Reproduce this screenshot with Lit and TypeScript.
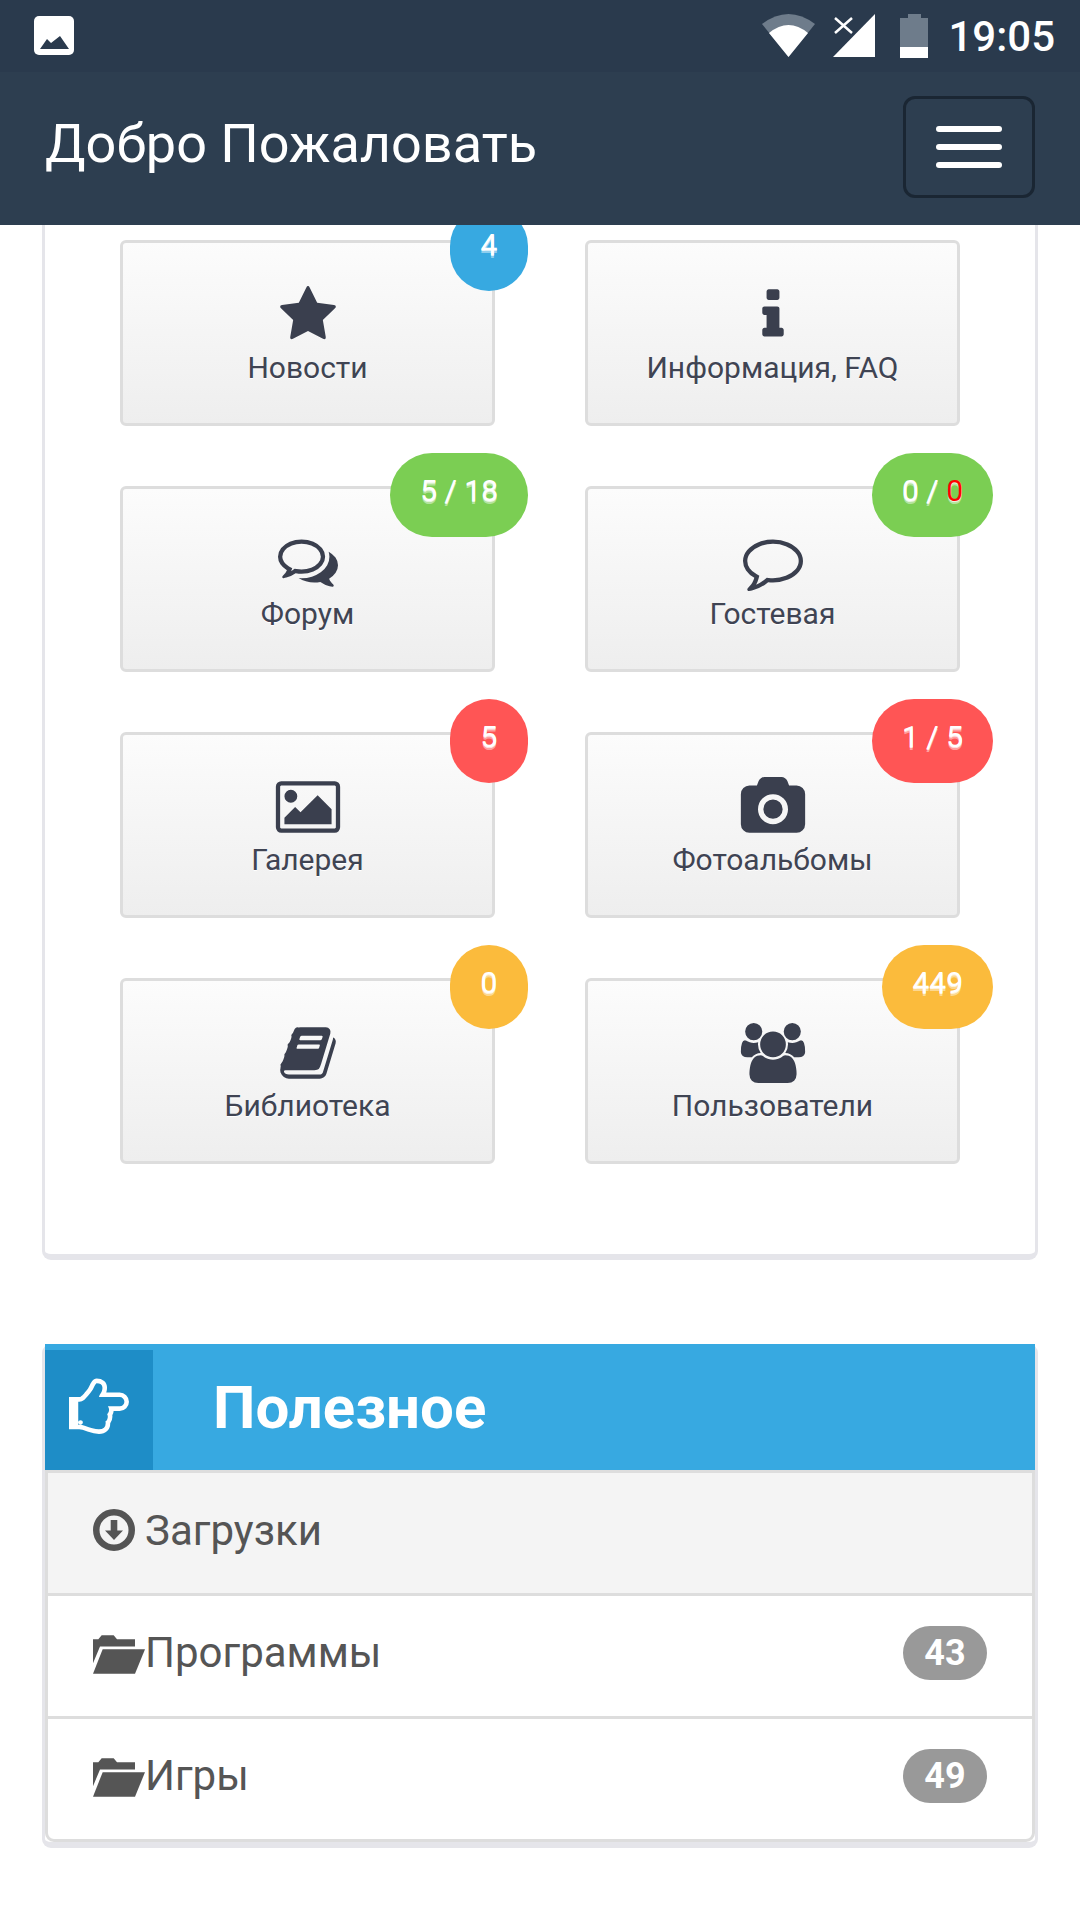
import { LitElement, html, css } from "lit";
import { customElement } from "lit/decorators.js";

// Glyph outlines on the 1792 grid, same box for every tile icon
const ICONS: Record<string, string> = {
  star: "M1728 647q0 22-26 48l-363 354 86 500q1 7 1 20 0 21-10.5 35.5t-30.5 14.5q-19 0-40-12l-449-236-449 236q-22 12-40 12-21 0-31.5-14.5t-10.5-35.5q0-6 2-20l86-500-364-354q-25-27-25-48 0-37 56-46l502-73 225-455q19-41 49-41t49 41l225 455 502 73q56 9 56 46z",
  info: "M1216 1344v128q0 26-19 45t-45 19h-512q-26 0-45-19t-19-45v-128q0-26 19-45t45-19h64v-384h-64q-26 0-45-19t-19-45v-128q0-26 19-45t45-19h384q26 0 45 19t19 45v576h64q26 0 45 19t19 45zm-128-1152v192q0 26-19 45t-45 19h-256q-26 0-45-19t-19-45v-192q0-26 19-45t45-19h256q26 0 45 19t19 45z",
  comments: "M704 384q-153 0-286 52t-211.5 141-78.5 191q0 82 53 158t149 132l97 56-35 84q34-20 62-39l44-31 53 10q78 14 153 14 153 0 286-52t211.5-141 78.5-191-78.5-191-211.5-141-286-52zm0-128q191 0 353.5 68.5t256.5 186.5 94 257-94 257-256.5 186.5-353.5 68.5q-86 0-176-16-124 88-278 128-36 9-86 16h-3q-11 0-20.5-8t-11.5-21q-1-3-1-6.5t.5-6.5 2-6l2.5-5 3.5-5.5 4-5 4.5-5 4-4.5q5-6 23-25t26-29.5 22.5-29 25-38.5 20.5-44q-124-72-195-177t-71-224q0-139 94-257t256.5-186.5 353.5-68.5zm822 1169q10 24 20.5 44t25 38.5 22.5 29 26 29.5 23 25q1 1 4 4.5t4.5 5 4 5 3.5 5.5l2.5 5 2 6 .5 6.5-1 6.5q-3 14-13 22t-22 7q-50-7-86-16-154-40-278-128-90 16-176 16-271 0-472-132 58 4 88 4 161 0 309-45t264-129q125-92 192-212t67-254q0-77-23-152 129 71 204 178t75 230q0 120-71 224.5t-195 176.5z",
  comment: "M896 384q-204 0-381.5 69.5t-282 187.5-104.5 255q0 112 71.5 213.5t201.5 175.5l87 50-27 96q-24 91-70 172 152-63 275-171l43-38 57 6q69 8 130 8 204 0 381.5-69.5t282-187.5 104.5-255-104.5-255-282-187.5-381.5-69.5zm896 512q0 174-120 321.5t-326 233-450 85.5q-70 0-145-8-198 175-460 242-49 14-114 22h-5q-15 0-27-10.5t-16-27.5v-1q-3-4-.5-12t2-10 4.5-9.5l6-9 7-8.5 8-9q7-8 31-34.5t34.5-38 31-39.5 32.5-51 27-59 26-76q-157-89-247.5-220t-90.5-281q0-174 120-321.5t326-233 450-85.5 450 85.5 326 233 120 321.5z",
  picture: "M576 576q0 80-56 136t-136 56-136-56-56-136 56-136 136-56 136 56 56 136zm1024 384v448h-1408v-192l320-320 160 160 512-512zm96-704h-1600q-13 0-22.5 9.5t-9.5 22.5v1216q0 13 9.5 22.5t22.5 9.5h1600q13 0 22.5-9.5t9.5-22.5v-1216q0-13-9.5-22.5t-22.5-9.5zm160 32v1216q0 66-47 113t-113 47h-1600q-66 0-113-47t-47-113v-1216q0-66 47-113t113-47h1600q66 0 113 47t47 113z",
  camera: "M896 672q119 0 203.5 84.5t84.5 203.5-84.5 203.5-203.5 84.5-203.5-84.5-84.5-203.5 84.5-203.5 203.5-84.5zm704-416q106 0 181 75t75 181v896q0 106-75 181t-181 75h-1408q-106 0-181-75t-75-181v-896q0-106 75-181t181-75h224l51-136q19-49 69.5-84.5t103.5-35.5h512q53 0 103.5 35.5t69.5 84.5l51 136h224zm-704 1152q185 0 316.5-131.5t131.5-316.5-131.5-316.5-316.5-131.5-316.5 131.5-131.5 316.5 131.5 316.5 316.5 131.5z",
  book: "M1703 478q40 57 18 129l-275 906q-19 64-76.5 107.5t-122.5 43.5h-923q-77 0-148.5-53.5t-99.5-131.5q-24-67-2-127 0-4 3-27t4-37q1-8-3-21.5t-3-19.5q2-11 8-21t16.5-23.5 16.5-23.5q23-38 45-91.5t30-91.5q3-10 .5-30t-.5-28q3-11 17-28t17-23q21-36 42-92t25-90q1-9-2.5-32t.5-28q4-13 22-30.5t22-22.5q19-26 42.5-84.5t27.5-96.5q1-8-3-25.5t-2-26.5q2-8 9-18t18-23 17-21q8-12 16.5-30.5t15-35 16-36 19.5-32 26.5-23.5 36-11.5 47.5 5.5l-1 3q38-9 51-9h761q74 0 114 56t18 130l-274 906q-36 119-71.5 153.5t-128.5 34.5h-869q-27 0-38 15-11 16-1 43 24 70 144 70h923q29 0 56-15.5t35-41.5l300-987q7-22 5-57 38 15 59 43zm-1064 2q-4 13 2 22.5t20 9.5h608q13 0 25.5-9.5t16.5-22.5l21-64q4-13-2-22.5t-20-9.5h-608q-13 0-25.5 9.5t-16.5 22.5zm-83 256q-4 13 2 22.5t20 9.5h608q13 0 25.5-9.5t16.5-22.5l21-64q4-13-2-22.5t-20-9.5h-608q-13 0-25.5 9.5t-16.5 22.5z",
  users: "M529 896q-162 5-265 128h-134q-82 0-138-40.5t-56-118.5q0-353 124-353 6 0 43.5 21t97.5 42.5 119 21.5q67 0 133-23-5 37-5 66 0 139 81 256zm1071 637q0 120-73 189.5t-194 69.5h-874q-121 0-194-69.5t-73-189.5q0-53 3.5-103.5t14-109 26.5-108.5 43-97.5 62-81 85.5-53.5 111.5-20q10 0 43 21.5t73 48 107 48 135 21.5 135-21.5 107-48 73-48 43-21.5q61 0 111.5 20t85.5 53.5 62 81 43 97.5 26.5 108.5 14 109 3.5 103.5zm-1024-1277q0 106-75 181t-181 75-181-75-75-181 75-181 181-75 181 75 75 181zm704 384q0 159-112.5 271.5t-271.5 112.5-271.5-112.5-112.5-271.5 112.5-271.5 271.5-112.5 271.5 112.5 112.5 271.5zm576 225q0 78-56 118.5t-138 40.5h-134q-103-123-265-128 81-117 81-256 0-29-5-66 66 23 133 23 59 0 119-21.5t97.5-42.5 43.5-21q124 0 124 353zm-128-609q0 106-75 181t-181 75-181-75-75-181 75-181 181-75 181 75 75 181z",
};

const HAND =
  "M384 1344q0-26-19-45t-45-19-45 19-19 45 19 45 45 19 45-19 19-45zm1152-576q0-51-39-89.5t-89-38.5h-576q0-20 15-48.5t33-55 33-68 15-84.5q0-67-44.5-97.5t-115.5-30.5q-24 0-90 139-24 44-37 65-40 64-112 145-71 81-101 106-69 57-140 57h-32v640h32q72 0 167 32t193.5 64 179.5 32q189 0 189-167 0-26-5-56 30-16 47.5-52.5t17.5-73.5-18-69q53-50 53-119 0-25-10-55.5t-25-47.5h331q52 0 90-38t38-90zm128-1q0 105-76 181t-181 76h-169q-4 62-37 119 3 21 3 43 0 101-60 178 1 139-85 219.5t-227 80.5q-133 0-322-69-164-59-223-59h-288q-53 0-90.5-37.5t-37.5-90.5v-640q0-53 37.5-90.5t90.5-37.5h288q10 0 21.5-4.5t23.5-14 22.5-18 24-22.5 20.5-21.5 19-21.5 14-17q65-74 100-129 13-21 33-62t37-72 40.5-63 55-49.5 69.5-17.5q125 0 206.5 67t81.5 189q0 68-22 128h374q104 0 180 76t76 179z";

const TILES = [
  { icon: "star", label: "Новости", tone: "blue", badge: html`4` },
  { icon: "info", label: "Информация, FAQ" },
  { icon: "comments", label: "Форум", tone: "green", badge: html`5 / 18` },
  { icon: "comment", label: "Гостевая", tone: "green", badge: html`0 / <span class="red">0</span>` },
  { icon: "picture", label: "Галерея", tone: "coral", badge: html`5` },
  { icon: "camera", label: "Фотоальбомы", tone: "coral", badge: html`1 / 5` },
  { icon: "book", label: "Библиотека", tone: "amber", badge: html`0` },
  { icon: "users", label: "Пользователи", tone: "amber", badge: html`449` },
];

const folder = html`<svg class="folder" viewBox="0 0 156 116">
  <path d="M0 12H16L26 0H62L72 12H126V34H21L0 84Z" />
  <path d="M29 42H156L126 116H0Z" />
</svg>`;

@customElement("app-root")
export class AppRoot extends LitElement {
  static styles = css`
    :host {
      display: block;
      height: 1920px;
      overflow: hidden;
      background: #fff;
      font-family: Roboto, "Liberation Sans", sans-serif;
    }

    .top {
      position: relative;
      z-index: 2;
      background: #2d3e50;
    }

    .status {
      height: 72px;
      background: #2a3a4d;
      display: flex;
      align-items: flex-start;
      color: #fff;
    }
    .status svg {
      display: block;
      flex: none;
      margin-top: 14px;
    }
    .status .pic {
      margin: 16px auto 0 34px;
    }
    .status .wifi {
      margin-right: 18px;
    }
    .status .signal {
      margin-right: 25px;
    }
    .clock {
      margin: 13px 25px 0 20px;
      font-size: 42px;
      line-height: 48px;
      font-weight: 500;
    }

    .nav {
      height: 153px;
      box-sizing: border-box;
      padding: 24px 45px 0;
      display: flex;
      align-items: flex-start;
      justify-content: space-between;
      color: #fff;
    }
    .brand {
      font-size: 54px;
      line-height: 72px;
      margin-top: 12px;
    }
    .toggle {
      width: 132px;
      height: 102px;
      box-sizing: border-box;
      border: 3px solid #1a2633;
      border-radius: 12px;
      display: flex;
      flex-direction: column;
      align-items: center;
      gap: 12px;
      padding-top: 27px;
    }
    .toggle i {
      display: block;
      width: 66px;
      height: 6px;
      border-radius: 3px;
      background: #fff;
    }

    .panel {
      margin: 0 42px;
      border: solid #e5e5ea;
      border-width: 0 3px 6px;
      border-radius: 9px;
      background: #fff;
    }

    .tiles {
      margin-top: -30px;
      padding: 45px 75px 90px;
      display: grid;
      grid-template-columns: 375px 375px;
      column-gap: 90px;
      row-gap: 60px;
    }
    .tile {
      position: relative;
      height: 186px;
      box-sizing: border-box;
      padding-top: 42px;
      border: 3px solid #ddd;
      border-radius: 6px;
      background: linear-gradient(#fcfcfc, #eee);
      color: #3f4453;
      display: flex;
      flex-direction: column;
      align-items: center;
    }
    .tile svg {
      display: block;
      width: 60px;
      height: 60px;
      overflow: visible;
      fill: #3a3f4e;
    }
    .tile span.name {
      font-size: 30px;
      line-height: 45px;
      text-shadow: 0 1px 0 #fff;
    }
    .badge {
      position: absolute;
      top: -36px;
      right: -36px;
      min-width: 78px;
      height: 84px;
      box-sizing: border-box;
      padding: 0 30px;
      border-radius: 42px;
      color: #fff;
      font-size: 30px;
      font-weight: 400;
      line-height: 76px;
      text-align: center;
      text-shadow: 0 1px 0 rgba(255, 255, 255, 0.8), 0 3px 0 rgba(255, 255, 255, 0.45);
    }
    .blue {
      background: #37a9e1;
    }
    .green {
      background: #7bce53;
    }
    .coral {
      background: #ff5555;
    }
    .amber {
      background: #fbbb3c;
    }
    .red {
      color: #f00;
    }

    .useful {
      margin-top: 84px;
    }
    .head {
      height: 126px;
      box-sizing: border-box;
      padding-top: 6px;
      background: #37a9e1;
      color: #fff;
      display: flex;
    }
    .hand {
      width: 108px;
      height: 120px;
      background: #1e8dc7;
      display: flex;
      justify-content: center;
      align-items: center;
    }
    .hand svg {
      display: block;
      width: 60px;
      height: 64.6px;
      fill: #fff;
      margin-bottom: 8px;
    }
    .head h2 {
      margin: 0 0 0 60px;
      font-size: 60px;
      line-height: 116px;
      font-weight: 700;
    }

    .list {
      border: 3px solid #ddd;
      border-radius: 0 0 9px 9px;
      color: #555;
      font-size: 42px;
    }
    .row {
      height: 120px;
      padding: 0 45px 0;
      display: flex;
      align-items: center;
      border-bottom: 3px solid #ddd;
    }
    .row:last-child {
      border-bottom: 0;
    }
    .row.current {
      background: #f4f4f4;
    }
    .row .text {
      line-height: 48px;
      margin-bottom: 6px;
    }
    .row.current .text {
      margin-bottom: 4px;
    }
    .row svg {
      display: block;
      flex: none;
      fill: #555;
    }
    .folder {
      width: 52px;
      height: 39px;
      margin-bottom: 3px;
    }
    .down {
      width: 42px;
      height: 42px;
      margin: 0 10px 7px 0;
    }
    .count {
      margin: 0 0 6px auto;
      min-width: 84px;
      height: 54px;
      box-sizing: border-box;
      border-radius: 27px;
      background: #999;
      color: #fff;
      font-size: 36px;
      font-weight: 700;
      line-height: 54px;
      text-align: center;
    }
  `;

  renderStatus() {
    return html`<div class="status">
      <svg class="pic" width="40" height="39" viewBox="0 0 40 39">
        <rect width="40" height="39" rx="5" fill="#fff" />
        <path d="M6 33L13 23L17 27L26 20L35 33Z" fill="#2a3a4d" />
      </svg>
      <svg class="wifi" width="53" height="43" viewBox="0 0 53 43">
        <path d="M0 10Q26.5-10 53 10L26.5 43Z" fill="#6e7c8b" />
        <path d="M7 19Q26.5 3 46 19L26.5 43Z" fill="#fff" />
      </svg>
      <svg class="signal" width="42" height="43" viewBox="0 0 42 43">
        <path d="M42 0V43H0Z" fill="#fff" />
        <path d="M2 4L19 19M19 4L2 19" stroke="#fff" stroke-width="2.5" />
      </svg>
      <svg width="28" height="44" viewBox="0 0 28 44">
        <path d="M8 0H21V4H28V33H0V4H8Z" fill="#6e7c8b" />
        <rect y="33" width="28" height="11" fill="#fff" />
      </svg>
      <span class="clock">19:05</span>
    </div>`;
  }

  render() {
    return html`
      <div class="top">
        ${this.renderStatus()}
        <div class="nav">
          <span class="brand">Добро Пожаловать</span>
          <div class="toggle"><i></i><i></i><i></i></div>
        </div>
      </div>

      <div class="panel tiles">
        ${TILES.map(
          (t) => html`<div class="tile">
            <svg viewBox="0 0 1792 1792"><path d=${ICONS[t.icon]} /></svg>
            <span class="name">${t.label}</span>
            ${t.badge ? html`<div class="badge ${t.tone}">${t.badge}</div>` : ""}
          </div>`
        )}
      </div>

      <div class="panel useful">
        <div class="head">
          <div class="hand">
            <svg viewBox="0 0 1664 1792"><path d=${HAND} /></svg>
          </div>
          <h2>Полезное</h2>
        </div>
        <div class="list">
          <div class="row current">
            <svg class="down" viewBox="0 0 42 42">
              <circle cx="21" cy="21" r="17.75" fill="none" stroke="#555" stroke-width="6.5" />
              <path d="M17.7 11H24.3V21.5H30L21 31L12 21.5H17.7Z" />
            </svg>
            <span class="text">Загрузки</span>
          </div>
          <div class="row">
            ${folder}<span class="text">Программы</span><span class="count">43</span>
          </div>
          <div class="row">
            ${folder}<span class="text">Игры</span><span class="count">49</span>
          </div>
        </div>
      </div>
    `;
  }
}
